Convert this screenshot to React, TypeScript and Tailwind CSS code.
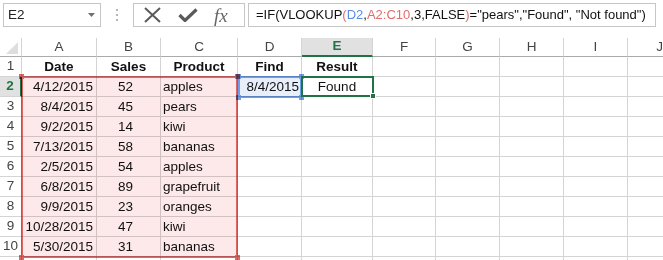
import React from "react";

const COLS = ["A", "B", "C", "D", "E", "F", "G", "H", "I", "J"];

const data = [
  ["4/12/2015", "52", "apples"],
  ["8/4/2015", "45", "pears"],
  ["9/2/2015", "14", "kiwi"],
  ["7/13/2015", "58", "bananas"],
  ["2/5/2015", "54", "apples"],
  ["6/8/2015", "89", "grapefruit"],
  ["9/9/2015", "23", "oranges"],
  ["10/28/2015", "47", "kiwi"],
  ["5/30/2015", "31", "bananas"],
];

const cell = "border-r border-b border-[#d4d4d4] whitespace-nowrap leading-[19px] px-[2px]";
const hdr = "border-r border-[#d4d4d4] flex items-center justify-center text-[#444]";

function Handle({ pos, color }: { pos: string; color: string }) {
  return <div className={`absolute w-[5px] h-[5px] ${pos} ${color}`} />;
}

function TopBar() {
  return (
    <div className="flex h-[38px] items-start pt-[3px] pl-[3px]">
      {/* name box */}
      <div className="w-[98px] h-[24px] border border-[#c6c6c6] flex items-center justify-between pl-[4px] pr-[5px]">
        <span className="text-[13.5px] text-[#222]">E2</span>
        <svg width="7" height="4" viewBox="0 0 7 4">
          <path d="M0 0 L7 0 L3.5 4 Z" fill="#707070" />
        </svg>
      </div>
      <div className="w-[32px] h-[24px] flex flex-col items-center justify-center gap-[3px]">
        <div className="w-[2px] h-[2px] bg-[#b5b5b5]" />
        <div className="w-[2px] h-[2px] bg-[#b5b5b5]" />
        <div className="w-[2px] h-[2px] bg-[#b5b5b5]" />
      </div>
      {/* cancel / enter / fx */}
      <div className="w-[112px] h-[24px] border border-[#c6c6c6] flex items-center pl-[9px] gap-[16px]">
        <svg width="19" height="16" viewBox="0 0 19 16">
          <path d="M2 1 L17 15 M17 1 L2 15" stroke="#5a5a5a" strokeWidth="2" />
        </svg>
        <svg width="20" height="14" viewBox="0 0 20 14">
          <path d="M1.5 7 L7 12.5 L18.5 1.5" stroke="#5a5a5a" strokeWidth="3.2" fill="none" />
        </svg>
        <span className="text-[19px] italic text-[#666] leading-none" style={{ fontFamily: '"Liberation Serif", serif' }}>
          fx
        </span>
      </div>
      <div className="flex-1 ml-[3px] mr-[7px] h-[24px] border border-[#c6c6c6] flex items-center pl-[7px] text-[13px] text-[#111] whitespace-nowrap">
        =IF(VLOOKUP<span className="text-[#e06c6c]">(</span>
        <span className="text-[#5b8ce6]">D2</span>,<span className="text-[#e06c6c]">A2:C10</span>,3,FALSE
        <span className="text-[#e06c6c]">)</span>="pears","Found", "Not found")
      </div>
    </div>
  );
}

export default function App() {
  return (
    <div
      className="w-[663px] h-[260px] bg-white overflow-hidden text-[13.5px] text-[#111]"
      style={{ fontFamily: '"Liberation Sans", Arial, sans-serif' }}
    >
      <TopBar />
      <div className="grid grid-cols-[22px_75px_64px_77px_64px_71px_63px_64px_64px_64px_64px] grid-rows-[19px_repeat(11,20px)]">
        {/* column headers */}
        <div className="border-r border-b border-[#ababab] border-r-[#d4d4d4] flex items-end justify-end pr-[3px] pb-[2px]">
          <svg width="12" height="12" viewBox="0 0 12 12">
            <path d="M12 0 L12 12 L0 12 Z" fill="#dedede" />
          </svg>
        </div>
        {COLS.map((c) =>
          c === "E" ? (
            <div key={c} className={`${hdr} bg-[#e1e1e1] border-b-2 border-b-[#217346] font-bold text-[#217346]`}>
              {c}
            </div>
          ) : (
            <div key={c} className={`${hdr} border-b border-b-[#ababab]`}>
              {c}
            </div>
          )
        )}

        {/* row 1 */}
        <div className="border-r border-b border-[#d4d4d4] flex items-center justify-center text-[#444]">1</div>
        <div className={`${cell} text-center font-bold`}>Date</div>
        <div className={`${cell} text-center font-bold`}>Sales</div>
        <div className={`${cell} text-center font-bold`}>Product</div>
        <div className={`${cell} text-center font-bold`}>Find</div>
        <div className={`${cell} text-center font-bold`}>Result</div>
        {[0, 1, 2, 3, 4].map((i) => (
          <div key={i} className={cell} />
        ))}

        {/* rows 2..11 */}
        {Array.from({ length: 10 }).map((_, idx) => {
          const n = idx + 2;
          const row = data[idx];
          const isSel = n === 2;
          return (
            <React.Fragment key={n}>
              {isSel ? (
                <div className="border-r-2 border-b border-r-[#217346] border-b-[#d4d4d4] bg-[#e1e1e1] flex items-center justify-center font-bold text-[#217346]">
                  {n}
                </div>
              ) : (
                <div className="border-r border-b border-[#d4d4d4] flex items-center justify-center text-[#444]">
                  {n <= 10 ? n : ""}
                </div>
              )}
              <div className={`${cell} text-right pr-[3px] ${isSel ? "relative" : ""}`}>
                {row ? row[0] : ""}
                {isSel && (
                  <div className="absolute -left-px -top-px w-[217px] h-[182px] border-2 border-[#e06666] bg-[#fde9e9] mix-blend-multiply pointer-events-none">
                    <Handle pos="-left-[4px] -top-[4px]" color="bg-[#e06666]" />
                    <Handle pos="-right-[4px] -top-[4px]" color="bg-[#e06666]" />
                    <Handle pos="-left-[4px] -bottom-[4px]" color="bg-[#e06666]" />
                    <Handle pos="-right-[4px] -bottom-[4px]" color="bg-[#e06666]" />
                  </div>
                )}
              </div>
              <div className={`${cell} text-center pr-[8px]`}>{row ? row[1] : ""}</div>
              <div className={cell}>{row ? row[2] : ""}</div>
              {isSel ? (
                <>
                  <div className={`${cell} relative text-right pr-[2px]`}>
                    <div className="absolute left-0 -top-px w-[64px] h-[22px] border-2 border-[#6d9eeb] bg-[#e8effb] mix-blend-multiply pointer-events-none">
                      <Handle pos="-left-[4px] -top-[4px]" color="bg-[#6d9eeb]" />
                      <Handle pos="-right-[4px] -top-[4px]" color="bg-[#6d9eeb]" />
                      <Handle pos="-left-[4px] -bottom-[4px]" color="bg-[#6d9eeb]" />
                      <Handle pos="-right-[4px] -bottom-[4px]" color="bg-[#6d9eeb]" />
                    </div>
                    8/4/2015
                  </div>
                  <div className={`${cell} relative text-center`}>
                    Found
                    <div className="absolute -left-px -top-px w-[73px] h-[21px] border-2 border-[#217346] pointer-events-none">
                      <div className="absolute -right-[4px] -bottom-[4px] w-[6px] h-[6px] bg-[#217346] border border-white" />
                    </div>
                  </div>
                </>
              ) : (
                <>
                  <div className={cell} />
                  <div className={cell} />
                </>
              )}
              {[0, 1, 2, 3, 4].map((i) => (
                <div key={i} className={cell} />
              ))}
            </React.Fragment>
          );
        })}
      </div>
    </div>
  );
}
